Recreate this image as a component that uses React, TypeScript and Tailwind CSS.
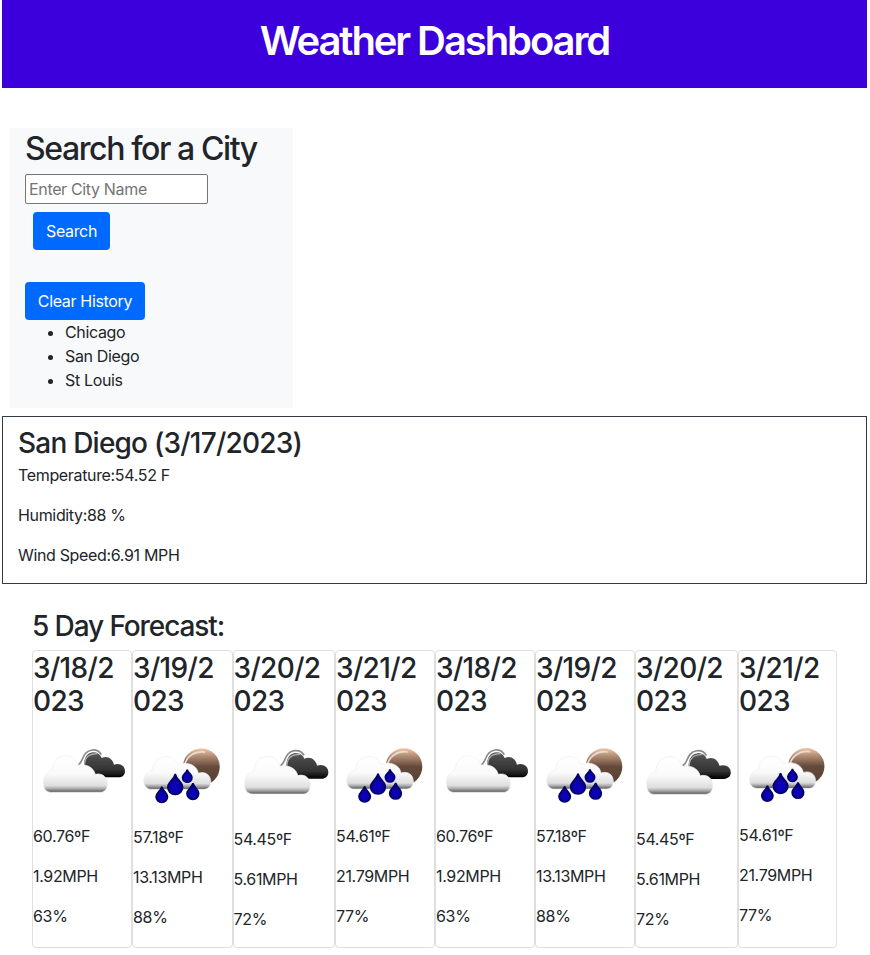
import { useId } from 'react';

const CLOUD =
  'M46 157 C28 157 22 143 22 128 C22 108 34 94 49 90 C49 65 66 47 90 47 C108 47 120 56 125 76 C150 70 173 82 178 103 C200 97 214 112 214 132 C214 148 206 157 192 157 Z';
const RAIN_CLOUD =
  'M46 147 C31 147 23 135 23 122 C23 105 35 93 49 90 C49 67 66 50 90 50 C108 50 120 59 125 72 C155 63 183 76 186 99 C207 92 223 105 223 124 C223 139 215 147 202 147 Z';
const DROPS = [
  'M77 139 C80 152 94 157 94 169 C94 179 86 186 77 186 C68 186 60 179 60 169 C60 157 74 152 77 139 Z',
  'M117 101 C120 119 139 124 139 140 C139 153 130 162 117 162 C104 162 95 153 95 140 C95 124 114 119 117 101 Z',
  'M153 88 C155 99 167 102 167 111 C167 120 161 126 153 126 C145 126 139 120 139 111 C139 102 151 99 153 88 Z',
  'M170 129 C173 142 187 147 187 159 C187 170 180 177 170 177 C160 177 152 170 152 159 C152 147 167 142 170 129 Z',
];

function WeatherIcon({ rain }: { rain: boolean }) {
  const id = useId();
  const g = (name: string) => `${id}${name}`;
  const url = (name: string) => `url(#${id}${name})`;
  return (
    <svg viewBox="0 0 98 98" className="block w-full">
      <defs>
        <linearGradient id={g('white')} x1="0" y1="0" x2="0" y2="1">
          <stop offset="0" stopColor="#fff" />
          <stop offset=".5" stopColor="#fafafa" />
          <stop offset=".82" stopColor="#dedede" />
          <stop offset=".9" stopColor="#aaa" />
          <stop offset="1" stopColor="#555" />
        </linearGradient>
        <linearGradient id={g('dark')} x1="0" y1="0" x2="0" y2="1">
          <stop offset="0" stopColor="#5e5e5e" />
          <stop offset=".25" stopColor="#484848" />
          <stop offset=".7" stopColor="#333" />
          <stop offset="1" stopColor="#000" />
        </linearGradient>
        <linearGradient id={g('moon')} x1="0" y1="0" x2="0" y2="1">
          <stop offset="0" stopColor="#f2c6a8" />
          <stop offset=".2" stopColor="#b48f77" />
          <stop offset=".5" stopColor="#65493a" />
          <stop offset="1" stopColor="#554033" />
        </linearGradient>
        <radialGradient id={g('drop')} cx=".5" cy=".65" r=".6">
          <stop offset="0" stopColor="#1005c8" />
          <stop offset=".5" stopColor="#0d04a8" />
          <stop offset="1" stopColor="#020050" />
        </radialGradient>
        <filter id={g('soft')} x="-10%" y="-10%" width="120%" height="120%">
          <feGaussianBlur stdDeviation="1.8" />
        </filter>
      </defs>
      <g transform="translate(3 14) scale(.3333)" filter={url('soft')}>
        {rain ? (
          <>
            <circle cx="195" cy="80" r="55" fill={url('moon')} />
            <path d="M144 78 C150 49 175 31 206 36" fill="none" stroke="#e9dcd4" strokeWidth="5" />
            <path d={RAIN_CLOUD} fill={url('white')} stroke="#eee" strokeWidth="2" />
            {DROPS.map((d) => (
              <path key={d} d={d} fill={url('drop')} stroke="#05006a" strokeWidth="5" />
            ))}
          </>
        ) : (
          <>
            <path
              d="M144 90 C142 58 150 39 170 37 C183 36 192 42 197 54 C214 45 230 56 234 74 C253 68 267 79 267 93 C267 105 259 112 247 112 L170 112 Z"
              fill={url('dark')}
            />
            <path d="M146 74 C146 54 158 41 184 41" fill="none" stroke="#b5b5b5" strokeWidth="3.5" />
            <path d="M127 74 C143 66 138 34 168 30 C180 29 190 33 196 44" fill="none" stroke="#8a8a8a" strokeWidth="5" />
            <path d={CLOUD} fill={url('white')} stroke="#eee" strokeWidth="2" />
          </>
        )}
      </g>
    </svg>
  );
}

const DAYS = [
  { day: '3/18/2', temp: '60.76', wind: '1.92', humidity: '63', rain: false },
  { day: '3/19/2', temp: '57.18', wind: '13.13', humidity: '88', rain: true },
  { day: '3/20/2', temp: '54.45', wind: '5.61', humidity: '72', rain: false },
  { day: '3/21/2', temp: '54.61', wind: '21.79', humidity: '77', rain: true },
];
const FORECAST = [...DAYS, ...DAYS];

export default function App() {
  return (
    <div className="h-[955px] w-[870px] overflow-hidden bg-white pr-[3px] pl-[2px] font-['Inter','Liberation_Sans',sans-serif] text-base leading-6 tracking-[-0.34px] text-[#212529]">
      <header className="h-[88px] bg-[#3c00dc] pt-[17px] text-center">
        <h1 className="text-[40px] leading-[48px] font-semibold tracking-[-2.1px] text-white">Weather Dashboard</h1>
      </header>

      <aside className="mt-10 ml-2 h-[280px] w-[283px] bg-[#f8f9fa] px-[15px]">
        <h2 className="h-[46px] pt-[2px] text-[32px] leading-[38px] font-medium tracking-[-1.4px]">Search for a City</h2>
        <input
          placeholder="Enter City Name"
          className="block h-[30px] w-[183px] rounded-[2px] border border-[#767676] bg-white px-[3px] placeholder:text-[#757575]"
        />
        <button className="mt-2 ml-2 block h-[38px] w-[77px] rounded bg-[#0069ff] text-white">Search</button>
        <button className="mt-8 block h-[38px] w-[120px] rounded bg-[#0069ff] text-white">Clear History</button>
        <ul className="list-disc pl-10">
          <li>Chicago</li>
          <li>San Diego</li>
          <li>St Louis</li>
        </ul>
      </aside>

      <section className="mt-2 h-[168px] border border-[#343a40] px-[15px] pt-[9px]">
        <h3 className="h-[37px] pt-px text-[28px] leading-[33.6px] font-medium tracking-[-0.78px]">San Diego (3/17/2023)</h3>
        <p className="mb-4">Temperature:54.52 F</p>
        <p className="mb-4">Humidity:88 %</p>
        <p>Wind Speed:6.91 MPH</p>
      </section>

      <section className="px-[30px] pt-6">
        <h3 className="h-[42px] pt-px text-[28px] leading-[35px] font-medium tracking-[-1.1px]">5 Day Forecast:</h3>
        <div className="grid h-[298px] grid-cols-[100px_100.5px_102.5px_100px_100px_100px_103px_99px]">
          {FORECAST.map((d, i) => (
            <article key={i} className="rounded border border-[#dfdfdf]">
              <h3 className="mb-2 pt-px text-[28px] leading-[33px] font-medium tracking-[-0.65px]">
                {d.day}
                <br />
                023
              </h3>
              <WeatherIcon rain={d.rain} />
              <p className="mb-4">{d.temp}ºF</p>
              <p className="mb-4">{d.wind}MPH</p>
              <p>{d.humidity}%</p>
            </article>
          ))}
        </div>
      </section>
    </div>
  );
}
